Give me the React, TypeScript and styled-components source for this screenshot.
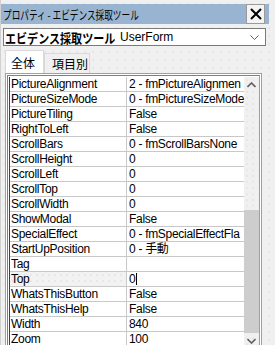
import * as React from "react";
import styled, { createGlobalStyle } from "styled-components";

const GlobalStyle = createGlobalStyle`
  html, body {
    margin: 0;
    padding: 0;
    width: 275px;
    height: 345px;
    overflow: hidden;
    background: #f0f0f0;
  }
`;

const UI_FONT = `"Liberation Sans", "Noto Sans CJK JP", sans-serif`;
const JP_FONT = `"Noto Sans CJK JP", "Liberation Sans", sans-serif`;

const Window = styled.div`
  width: 275px;
  height: 345px;
  box-sizing: border-box;
  display: flex;
  flex-direction: column;
  background-color: #f0f0f0;
  background-image: radial-gradient(#d8d8d8 0.6px, transparent 0.8px);
  background-size: 8px 8px;
  border-left: 1px solid #d0d0d0;
  overflow: hidden;
`;

const TitleBar = styled.div`
  margin-top: 4px;
  height: 24px;
  margin-right: 6px;
  display: flex;
  align-items: center;
  justify-content: space-between;
  background: #99b4d1;
  padding-left: 2px;
`;

const Title = styled.span`
  font-family: ${JP_FONT};
  font-size: 12px;
  color: #000;
  white-space: nowrap;
  display: inline-block;
  transform: scaleX(0.72);
  transform-origin: left center;
`;

const CloseButton = styled.div`
  width: 19px;
  height: 20px;
  margin-right: 4px;
  box-sizing: border-box;
  background: #f4f4f4;
  border: 1px solid #9a9a9a;
  display: flex;
  align-items: center;
  justify-content: center;
`;

const Combo = styled.div`
  margin: 4px 9px 0 2px;
  height: 18px;
  box-sizing: border-box;
  background: #fff;
  border: 1px solid #7a7a7a;
  display: flex;
  align-items: center;
  padding-left: 1px;
  position: relative;
`;

const ComboName = styled.span`
  font-family: ${JP_FONT};
  font-weight: 700;
  font-size: 13px;
  width: 110px;
  white-space: nowrap;
  display: inline-block;
  transform: scaleX(0.85);
  transform-origin: left center;
`;

const ComboType = styled.span`
  font-family: ${UI_FONT};
  font-size: 12px;
  margin-left: 5px;
`;

const Chevron = styled.svg`
  position: absolute;
  right: 6px;
  top: 6px;
`;

const Tabs = styled.div`
  display: flex;
  align-items: flex-end;
  height: 23px;
  margin-left: 4px;
  margin-top: 4px;
`;

const Tab = styled.div<{ $active?: boolean }>`
  font-family: ${JP_FONT};
  font-size: 12px;
  box-sizing: border-box;
  width: ${p => (p.$active ? 39 : 46)}px;
  height: ${p => (p.$active ? 23 : 20)}px;
  padding-left: ${p => (p.$active ? 5 : 7)}px;
  background: ${p => (p.$active ? "#fff" : "#f0f0f0")};
  border: 1px solid #d9d9d9;
  border-bottom: none;
  display: flex;
  align-items: center;
`;

const GridFrame = styled.div`
  flex: 1;
  display: flex;
  margin-left: 4px;
  margin-right: 13px;
  border: 1px solid #a0a0a0;
  border-bottom: none;
  padding: 1px 1px 0 1px;
  background: #fff;
`;

const GridInner = styled.div`
  flex: 1;
  display: flex;
  border: 1px solid #808080;
  border-bottom: none;
  border-right: 1px solid #a0a0a0;
  padding-top: 1px;
  padding-left: 1px;
  background: #fff;
  overflow: hidden;
`;

const Table = styled.div`
  flex: 1;
  display: flex;
  flex-direction: column;
  border-left: 1px solid #404040;
  overflow: hidden;
`;

const Row = styled.div`
  display: grid;
  grid-template-columns: 116px 1fr;
  height: 15px;
  flex-shrink: 0;
  box-sizing: border-box;
  border-bottom: 1px solid #c8c8c8;
`;

const Cell = styled.div<{ $selected?: boolean }>`
  font-family: ${UI_FONT};
  font-size: 12px;
  letter-spacing: -0.3px;
  line-height: 14px;
  height: 14px;
  padding-left: 1px;
  white-space: nowrap;
  overflow: hidden;
  color: #000;
  background-color: ${p => (p.$selected ? "#f2f2f2" : "#fff")};
  background-image: ${p =>
    p.$selected ? "radial-gradient(#dadada 0.6px, transparent 0.8px)" : "none"};
  background-size: 6px 6px;
  & + & {
    border-left: 1px solid #c8c8c8;
    padding-left: 2px;
  }
`;

const Caret = styled.span`
  display: inline-block;
  width: 1px;
  height: 12px;
  background: #000;
  margin-left: 1px;
  vertical-align: -2px;
`;

const ScrollBar = styled.div`
  width: 15px;
  display: flex;
  flex-direction: column;
  align-items: stretch;
  background: #f0f0f0;
  background-image: radial-gradient(#dcdcdc 0.6px, transparent 0.8px);
  background-size: 6px 6px;
`;

const ArrowBox = styled.div`
  height: 16px;
  display: flex;
  align-items: center;
  justify-content: center;
  flex-shrink: 0;
`;

const Track = styled.div`
  flex: 1;
  display: flex;
  flex-direction: column;
`;

const Thumb = styled.div`
  margin-top: 117px;
  height: 123px;
  background: #cdcdcd;
`;

const rows: [string, React.ReactNode][] = [
  ["PictureAlignment", "2 - fmPictureAlignmen"],
  ["PictureSizeMode", "0 - fmPictureSizeMode"],
  ["PictureTiling", "False"],
  ["RightToLeft", "False"],
  ["ScrollBars", "0 - fmScrollBarsNone"],
  ["ScrollHeight", "0"],
  ["ScrollLeft", "0"],
  ["ScrollTop", "0"],
  ["ScrollWidth", "0"],
  ["ShowModal", "False"],
  ["SpecialEffect", "0 - fmSpecialEffectFla"],
  ["StartUpPosition", "0 - 手動"],
  ["Tag", ""],
  ["Top", "0"],
  ["WhatsThisButton", "False"],
  ["WhatsThisHelp", "False"],
  ["Width", "840"],
  ["Zoom", "100"],
];

export default function App() {
  return (
    <>
      <GlobalStyle />
      <Window>
        <TitleBar>
          <Title>プロパティ - エビデンス採取ツール</Title>
          <CloseButton>
            <svg width="12" height="12" viewBox="0 0 12 12">
              <path d="M1 1 L11 11 M11 1 L1 11" stroke="#000" strokeWidth="2" />
            </svg>
          </CloseButton>
        </TitleBar>
        <Combo>
          <ComboName>エビデンス採取ツール</ComboName>
          <ComboType>UserForm</ComboType>
          <Chevron width="9" height="6" viewBox="0 0 9 6">
            <path d="M0.5 0.5 L4.5 4.5 L8.5 0.5" stroke="#606060" fill="none" />
          </Chevron>
        </Combo>
        <Tabs>
          <Tab $active>全体</Tab>
          <Tab>項目別</Tab>
        </Tabs>
        <GridFrame>
          <GridInner>
            <Table>
              {rows.map(([name, value]) => {
                const selected = name === "Top";
                return (
                  <Row key={name}>
                    <Cell $selected={selected}>{name}</Cell>
                    <Cell>
                      {value}
                      {selected && <Caret />}
                    </Cell>
                  </Row>
                );
              })}
            </Table>
            <ScrollBar>
              <ArrowBox>
                <svg width="9" height="6" viewBox="0 0 9 6">
                  <path d="M0.5 5 L4.5 1 L8.5 5" stroke="#606060" strokeWidth="1.6" fill="none" />
                </svg>
              </ArrowBox>
              <Track>
                <Thumb />
              </Track>
              <ArrowBox>
                <svg width="9" height="6" viewBox="0 0 9 6">
                  <path d="M0.5 1 L4.5 5 L8.5 1" stroke="#606060" strokeWidth="1.6" fill="none" />
                </svg>
              </ArrowBox>
            </ScrollBar>
          </GridInner>
        </GridFrame>
      </Window>
    </>
  );
}
